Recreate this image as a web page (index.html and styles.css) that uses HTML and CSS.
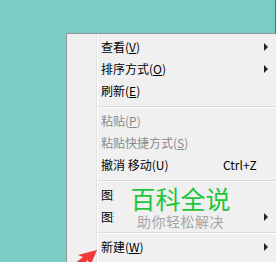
FILE: index.html
```html
<!DOCTYPE html>
<html lang="zh-CN">
<head>
    <meta charset="UTF-8">
    <title>桌面右键菜单</title>
    <link rel="stylesheet" href="styles.css">
</head>
<body>
    <div class="edge-line"></div>

    <div class="menu">
        <div class="items">
            <div class="item"><span class="label">查看(<u>V</u>)</span><span class="sub"></span></div>
            <div class="item"><span class="label">排序方式(<u>O</u>)</span><span class="sub"></span></div>
            <div class="item"><span class="label">刷新(<u>E</u>)</span></div>
            <div class="sep"></div>
            <div class="item disabled"><span class="label">粘贴(<u>P</u>)</span></div>
            <div class="item disabled"><span class="label">粘贴快捷方式(<u>S</u>)</span></div>
            <div class="item"><span class="label">撤消 移动(U)</span><span class="key">Ctrl+Z</span></div>
            <div class="sep"></div>
            <div class="item"><span class="label">图形属性...</span></div>
            <div class="item"><span class="label">图形选项</span><span class="sub"></span></div>
            <div class="sep"></div>
            <div class="item"><span class="label">新建(<u>W</u>)</span><span class="sub"></span></div>
        </div>
    </div>

    <!-- 水印 -->
    <div class="watermark">
        <div class="wm-title">百科全说</div>
        <div class="wm-sub">助你轻松解决</div>
    </div>

    <svg class="pointer" width="30" height="16" viewBox="0 0 30 16">
        <path d="M23 2 L4 7 L9 9 L0 16 L12 16 L13 12 L17 16 Z" fill="#f23a3a"/>
    </svg>
</body>
</html>
```

FILE: styles.css
```css
:root{
    --fundo: #7DCBC7;
    --menu: #F0F0F0;
    --borda: #979797;
    --texto: #000000;
    --desativado: #8A8A8A;
}

body{
    margin: 0;
    height: 262px;
    overflow: hidden;
    position: relative;
    background-color: var(--fundo);
    font-family: "Noto Sans CJK SC", "Noto Sans", sans-serif;
    font-size: 12px;
    color: var(--texto);
}

.edge-line{
    position: absolute;
    left: 275px;
    top: 0;
    width: 1px;
    height: 33px;
    background-color: #3c6f99;
}

.menu{
    margin: 33px 0 0 66px;
    width: 221px;
    height: 240px;
    padding-top: 2px;
    border: 1px solid var(--borda);
    background-color: var(--menu);
}

.items{
    background: linear-gradient(to right,
        transparent 29px, #E2E3E3 29px, #E2E3E3 30px,
        #FFFFFF 30px, #FFFFFF 31px, transparent 31px);
    min-height: 240px;
}

.item{
    display: flex;
    align-items: center;
    height: 22px;
    padding: 0 20px 0 34px;
    line-height: 22px;
    white-space: nowrap;
}

.item u{
    text-underline-offset: 1px;
}

.label{
    flex: 1;
}

.disabled{
    color: var(--desativado);
}

.key{
    width: 45px;
}

.sub{
    width: 0;
    height: 0;
    border-left: 4px solid #222;
    border-top: 4px solid transparent;
    border-bottom: 4px solid transparent;
}

.sep{
    margin: 4px 0 2px 31px;
    border-top: 1px solid #DCDCDC;
    border-bottom: 1px solid #FFFFFF;
}

.watermark{
    position: absolute;
    left: 114px;
    top: 183px;
    width: 133px;
    height: 47px;
    background-color: var(--menu);
    display: flex;
    flex-direction: column;
    align-items: center;
}

.wm-title{
    font-size: 25px;
    line-height: 30px;
    color: #1FC63A;
    letter-spacing: 0;
}

.wm-sub{
    font-size: 14px;
    line-height: 16px;
    color: #A6A6A6;
    letter-spacing: 0.5px;
}

.pointer{
    position: absolute;
    left: 74px;
    top: 248px;
}
```
